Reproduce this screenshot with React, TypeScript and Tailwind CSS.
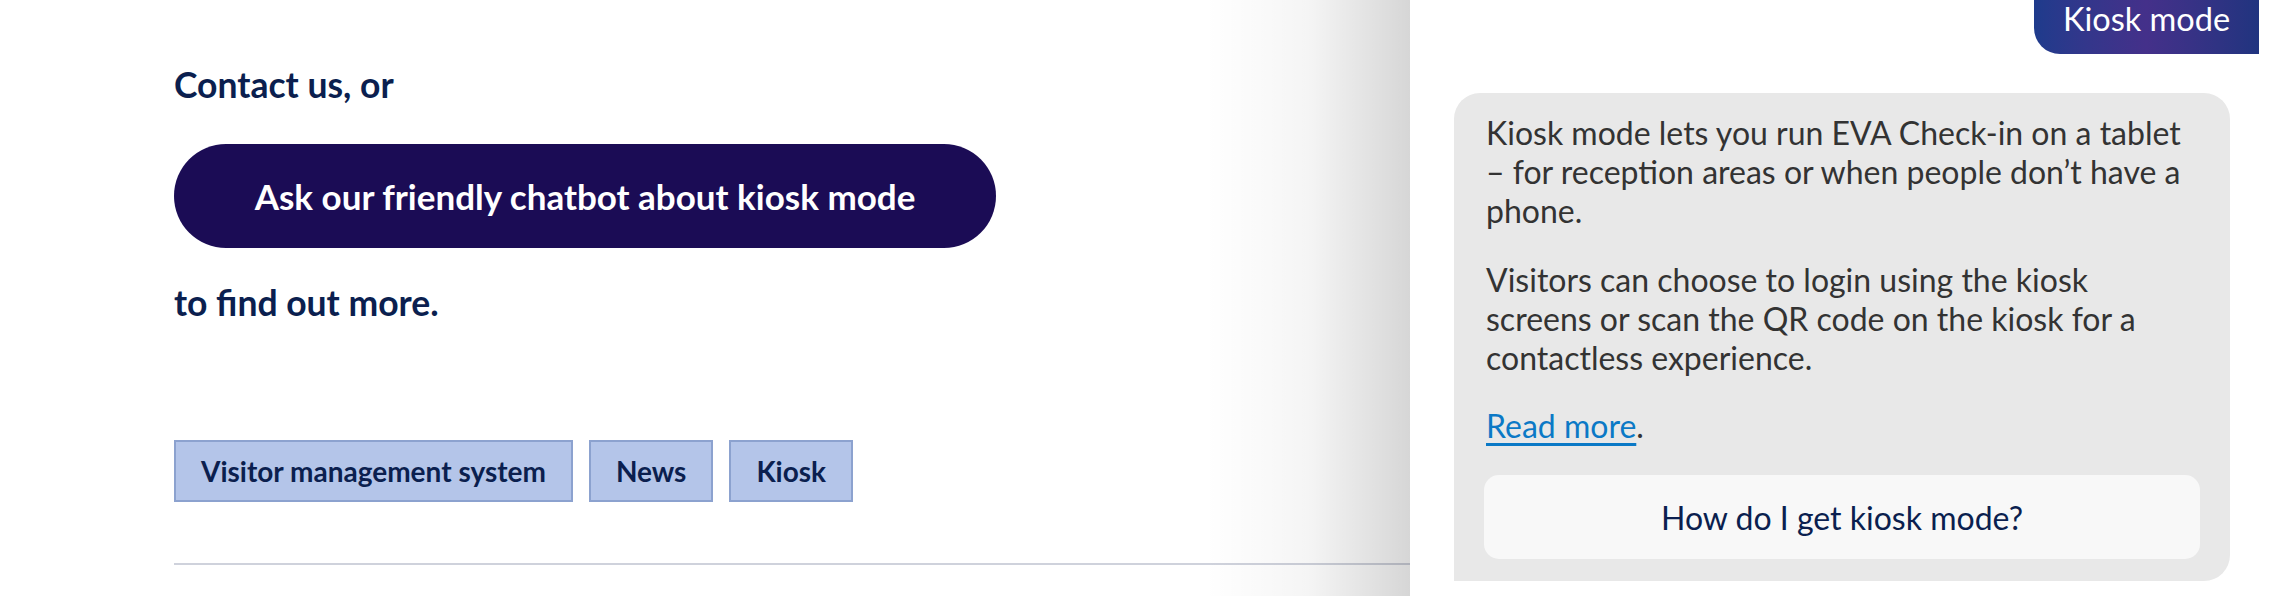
export default function App() {
  const tags = ["Visitor management system", "News", "Kiosk"];

  return (
    <div className="flex h-[596px] w-[2290px] overflow-hidden bg-white font-['Lato',_'Open_Sans',_sans-serif]">
      {/* Article column */}
      <section className="relative flex-1 pl-[174px] pt-[64px] text-[#0b1f4f]">
        <p className="text-[35.5px] font-bold leading-[42px]">Contact us, or</p>

        <button className="mt-[38px] flex h-[104px] w-[822px] items-center justify-center rounded-full bg-[#1b0c55] text-[35px] font-bold text-white">
          Ask our friendly chatbot about kiosk mode
        </button>

        <p className="mt-[34px] text-[35.5px] font-bold leading-[42px]">to find out more.</p>

        <div className="mt-[116px] flex gap-4">
          {tags.map((t) => (
            <span
              key={t}
              className="flex h-[62px] items-center border-2 border-[#8ca2cf] bg-[#b4c5e9] px-[25px] text-[28px] font-bold"
            >
              {t}
            </span>
          ))}
        </div>

        <div className="mt-[61px] h-[2px] bg-[#cfd2dc]" />

        {/* Shadow cast by the chat panel */}
        <div className="pointer-events-none absolute right-0 top-0 h-full w-[205px] bg-gradient-to-r from-transparent via-[rgba(0,0,0,0.04)] to-[rgba(0,0,0,0.16)]" />
      </section>

      {/* Chat panel */}
      <aside className="flex w-[880px] flex-col bg-white">
        <div className="flex justify-end pr-[31px]">
          <div className="flex h-[54px] w-[225px] items-end justify-center rounded-bl-[26px] bg-gradient-to-r from-[#1e3b8c] via-[#44308a] to-[#20347f] pb-[15px] text-[32.5px] leading-[40px] text-white">
            Kiosk mode
          </div>
        </div>

        <div className="ml-[44px] mt-[39px] w-[776px] rounded-t-[26px] rounded-br-[26px] bg-[#e8e8e8] pb-[22px] pl-[30px] pr-[30px] pt-[20px] text-[32px] leading-[39px] text-[#333333]">
          <p className="pl-[2px]">
            Kiosk mode lets you run EVA Check-in on a tablet – for reception areas or when people don’t have a phone.
          </p>
          <p className="mt-[30px] pl-[2px]">
            Visitors can choose to login using the kiosk screens or scan the QR code on the kiosk for a contactless experience.
          </p>
          <p className="mt-[29px] pl-[2px]">
            <a href="#" className="text-[#0b79c6] underline underline-offset-[5px]">
              Read more
            </a>
            .
          </p>
          <button className="mt-[30px] flex h-[84px] w-full items-center justify-center rounded-[15px] bg-[#f8f8f8] text-[32px] text-[#0b1f4f]">
            How do I get kiosk mode?
          </button>
        </div>
      </aside>
    </div>
  );
}
